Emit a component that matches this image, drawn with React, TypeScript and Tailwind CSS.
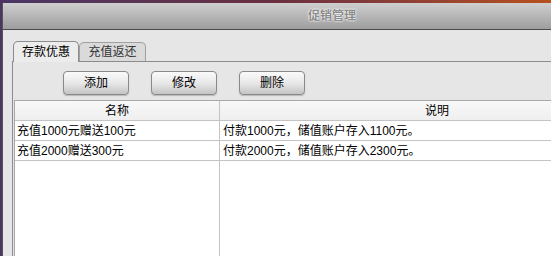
import React from "react";

const font = { fontFamily: '"Liberation Sans", "Noto Sans CJK SC", sans-serif' };

function Btn({ label }: { label: string }) {
  return (
    <div className="w-[66px] h-[24px] flex items-center justify-center rounded-[4px] border border-[#8a8a8a] bg-gradient-to-b from-[#fafafa] via-[#e8e8e8] to-[#c4c4c4] text-[12px] text-black shadow-[0_1px_1px_rgba(0,0,0,0.2)]">
      {label}
    </div>
  );
}

const rows = [
  ["充值1000元赠送100元", "付款1000元，储值账户存入1100元。"],
  ["充值2000赠送300元", "付款2000元，储值账户存入2300元。"],
];

export default function App() {
  return (
    <div
      className="w-[551px] h-[256px] overflow-hidden flex flex-col bg-gradient-to-r from-[#4a3565] via-[#6a3040] to-[#b8501a]"
      style={font}
    >
      <div className="h-[3px] shrink-0" />
      <div className="flex-1 ml-[2px] border-l border-[#555] flex flex-col min-h-0">
        <div className="h-[27px] shrink-0 bg-gradient-to-b from-[#cfcfcf] to-[#9e9e9e] border-b border-[#4a4a4a] flex items-center pl-[305px]">
          <span className="text-[12px] font-bold text-[#8c8c8c] tracking-[0px] [text-shadow:0_0_2px_#fff,0_0_2px_#fff]">
            促销管理
          </span>
        </div>
        <div className="flex-1 bg-[#e6e6e6] pt-[11px] pl-[9px] flex flex-col min-h-0">
          <div className="flex items-end h-[20px] pl-[1px]">
            <div className="h-[21px] w-[66px] -mb-px relative z-10 rounded-t-[5px] border border-b-0 border-[#8c8c8c] bg-[#ececec] flex items-center justify-center text-[12px] text-black">
              存款优惠
            </div>
            <div className="h-[19px] w-[67px] rounded-t-[5px] border border-b-0 border-[#a0a0a0] bg-[#dadada] flex items-center justify-center text-[12px] text-[#333]">
              充值返还
            </div>
          </div>
          <div className="flex-1 border-t border-l border-[#8c8c8c] flex flex-col pl-[1px] min-h-0">
            <div className="flex gap-[22px] pl-[49px] pt-[9px] h-[38px]">
              <Btn label="添加" />
              <Btn label="修改" />
              <Btn label="删除" />
            </div>
            <div className="flex-1 border-t border-l border-[#a8a8a8] bg-white w-[640px] flex flex-col text-[12px] text-black">
              <div className="flex h-[20px] bg-gradient-to-b from-[#f8f8f8] to-[#efefef] border-b border-[#c4c4c4]">
                <div className="w-[205px] border-r border-[#c4c4c4] flex items-center justify-center">名称</div>
                <div className="flex-1 flex items-center justify-center">说明</div>
              </div>
              {rows.map((r, i) => (
                <div key={i} className="flex h-[20px] border-b border-[#c4c4c4]">
                  <div className="w-[205px] border-r border-[#c4c4c4] flex items-center pl-[2px]">{r[0]}</div>
                  <div className="flex-1 flex items-center pl-[3px]">{r[1]}</div>
                </div>
              ))}
              <div className="flex flex-1">
                <div className="w-[205px] border-r border-[#c4c4c4]" />
                <div className="flex-1" />
              </div>
            </div>
          </div>
        </div>
      </div>
    </div>
  );
}
